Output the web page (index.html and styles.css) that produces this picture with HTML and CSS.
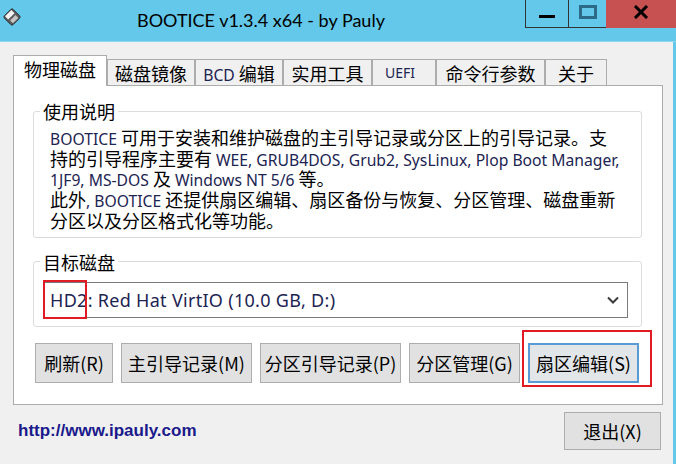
FILE: index.html
```html
<!DOCTYPE html>
<html lang="zh-CN">
<head>
    <meta charset="UTF-8">
    <meta name="viewport" content="width=device-width, initial-scale=1.0">
    <link rel="stylesheet" href="styles.css">
    <title>BOOTICE v1.3.4 x64 - by Pauly</title>
</head>
<body>
<div class="window">
    <header class="titlebar">
        <svg class="titlebar__icon" viewBox="0 0 16 16">
            <g transform="rotate(-45 8 8)">
                <rect x="2.5" y="2.5" width="11" height="11" rx="1.5" fill="#5a5a5a" stroke="#2b2b2b" stroke-width="0.8"/>
                <rect x="4" y="3.2" width="8" height="4" fill="#f2f2f2"/>
                <rect x="4.6" y="9" width="6.8" height="3.6" fill="#c4c4c4"/>
            </g>
        </svg>
        <div class="titlebar__text">BOOTICE v1.3.4 x64 - by Pauly</div>
        <div class="titlebar__controls">
            <div class="titlebar__btn titlebar__btn--min"><span class="titlebar__min-bar"></span></div>
            <div class="titlebar__btn titlebar__btn--max"><span class="titlebar__max-box"></span></div>
            <div class="titlebar__btn titlebar__btn--close">
                <svg class="titlebar__x" viewBox="0 0 16 14">
                    <path d="M2 1L14 13M14 1L2 13" stroke="#000" stroke-width="3"/>
                </svg>
            </div>
        </div>
    </header>

    <main class="client">
        <ul class="tabs">
            <li class="tab tab--active" style="width: 94px">物理磁盘</li>
            <li class="tab" style="width: 88px">磁盘镜像</li>
            <li class="tab" style="width: 88px"><span class="latin">BCD</span> 编辑</li>
            <li class="tab" style="width: 89px">实用工具</li>
            <li class="tab tab--small" style="width: 64px">UEFI</li>
            <li class="tab" style="width: 109px">命令行参数</li>
            <li class="tab" style="width: 62px">关于</li>
        </ul>

        <section class="panel">
            <fieldset class="group group--info">
                <legend class="group__title">使用说明</legend>
                <p class="group__text">
                    <span class="latin">BOOTICE</span> 可用于安装和维护磁盘的主引导记录或分区上的引导记录。支<br>
                    持的引导程序主要有 <span class="latin">WEE, GRUB4DOS, Grub2, SysLinux, Plop Boot Manager,</span><br>
                    <span class="latin">1JF9, MS-DOS</span> 及 <span class="latin">Windows NT 5/6</span> 等。<br>
                    此外<span class="latin">, BOOTICE</span> 还提供扇区编辑、扇区备份与恢复、分区管理、磁盘重新<br>
                    分区以及分区格式化等功能。
                </p>
            </fieldset>

            <fieldset class="group group--disk">
                <legend class="group__title">目标磁盘</legend>
                <div class="combo">
                    <span class="combo__value">HD2: Red Hat VirtIO (10.0 GB, D:)</span>
                    <svg class="combo__arrow" viewBox="0 0 12 8">
                        <path d="M1 1.5L6 6.5L11 1.5" fill="none" stroke="#3a3a3a" stroke-width="2"/>
                    </svg>
                </div>
            </fieldset>

            <div class="actions">
                <button class="btn" style="width: 78px">刷新(R)</button>
                <button class="btn" style="width: 131px">主引导记录(M)</button>
                <button class="btn" style="width: 141px">分区引导记录(P)</button>
                <button class="btn" style="width: 111px">分区管理(G)</button>
                <button class="btn btn--focus" style="width: 111px">扇区编辑(S)</button>
            </div>
        </section>

        <footer class="footer">
            <a class="footer__link" href="#">http://www.ipauly.com</a>
            <button class="btn btn--exit">退出(X)</button>
        </footer>
    </main>

    <div class="mark mark--hd"></div>
    <div class="mark mark--sector"></div>
</div>
</body>
</html>
```

FILE: styles.css
```css
body {
    margin: 0;
    padding: 0;
    width: 676px;
    height: 464px;
    overflow: hidden;
    font-family: "Noto Sans CJK SC", "Noto Sans", sans-serif;
    font-size: 18px;
    color: #000000;
    background-color: #f0f0f0;
}

.window {
    position: relative;
    height: 464px;
    display: flex;
    flex-direction: column;
}

/* title bar */
.titlebar {
    height: 41px;
    background-color: #63c8e9;
    border-bottom: 1px solid #8fd5ee;
    display: flex;
    align-items: flex-start;
}
.titlebar__icon {
    width: 18px;
    height: 18px;
    margin: 8px 0 0 3px;
}
.titlebar__text {
    margin: 6px 0 0 116px;
    font-family: Lato, "Noto Sans", sans-serif;
    font-size: 18px;
    line-height: 28px;
}
.titlebar__controls {
    margin-left: auto;
    height: 28px;
    display: flex;
}
.titlebar__btn {
    box-sizing: border-box;
    height: 28px;
    display: flex;
    justify-content: center;
}
.titlebar__btn--min {
    width: 43px;
    border-left: 1px solid #333333;
    border-bottom: 1px solid #333333;
    padding-top: 15px;
}
.titlebar__btn--max {
    width: 38px;
    border-left: 1px solid #333333;
    border-bottom: 1px solid #333333;
    padding-top: 5px;
}
.titlebar__btn--close {
    width: 70px;
    background-color: #c75050;
    padding-top: 5px;
}
.titlebar__min-bar {
    width: 16px;
    height: 3px;
    background-color: #000000;
}
.titlebar__max-box {
    box-sizing: border-box;
    width: 18px;
    height: 14px;
    border: 3px solid #2b6b88;
}
.titlebar__x {
    width: 16px;
    height: 14px;
}

/* client area */
.client {
    flex: 1;
    border-right: 3px solid #63c8e9;
    display: flex;
    flex-direction: column;
}

.tabs {
    list-style: none;
    margin: 13px 0 -1px 13px;
    padding: 0;
    display: flex;
    align-items: flex-end;
    position: relative;
    z-index: 1;
}
.tab {
    box-sizing: border-box;
    height: 26px;
    margin-bottom: 1px;
    padding-top: 2px;
    border: 1px solid #acacac;
    border-bottom: none;
    background-color: #f0f0f0;
    text-align: center;
    line-height: 22px;
    white-space: nowrap;
}
.tab--active {
    height: 31px;
    margin-bottom: 0;
    padding-top: 2px;
    background-color: #ffffff;
}
.tab--small {
    padding-right: 8px;
    font-family: "Noto Sans", sans-serif;
    font-size: 14px;
    color: #1c2452;
}

.panel {
    box-sizing: border-box;
    height: 320px;
    margin: 0 10px 0 13px;
    padding: 0 20px 0 19px;
    border: 1px solid #acacac;
    background-color: #ffffff;
    display: flex;
    flex-direction: column;
}

.group {
    margin: 0;
    border: 1px solid #dcdcdc;
    border-radius: 3px;
}
.group__title {
    margin-left: -10px;
    padding: 0 3px;
    line-height: 22px;
}
.group--info {
    margin-top: 14px;
    padding: 5px 8px 7px 16px;
}
.group__text {
    margin: 0;
    line-height: 20px;
    white-space: nowrap;
}
.latin {
    font-family: "Noto Sans", sans-serif;
    font-size: 15.7px;
    line-height: 1;
    color: #1c2452;
}

.group--disk {
    margin-top: 13px;
    padding: 9px 13px 8px 9px;
}
.group--disk .group__title {
    margin-left: -3px;
}
.combo {
    box-sizing: border-box;
    height: 36px;
    padding: 0 8px 0 6px;
    border: 1px solid #7a7a7a;
    background-color: #ffffff;
    display: flex;
    align-items: center;
}
.combo__value {
    font-family: "Noto Sans", sans-serif;
    letter-spacing: 0.3px;
    color: #1c2452;
}
.combo__arrow {
    margin-left: auto;
    width: 12px;
    height: 8px;
}

.actions {
    margin: 16px 0 0 2px;
    display: flex;
    gap: 8px;
}
.btn {
    box-sizing: border-box;
    height: 40px;
    padding: 0;
    border: 1px solid #adadad;
    background-color: #e1e1e1;
    font-family: inherit;
    font-size: 18px;
    color: #000000;
    white-space: nowrap;
}
.btn--focus {
    border: 2px solid #5a9bd5;
    background-color: #e3e6e9;
}

.footer {
    flex: 1;
    padding: 0 12px 7px 18px;
    display: flex;
    align-items: center;
}
.footer__link {
    font-family: "Liberation Sans", Arial, sans-serif;
    font-weight: bold;
    font-size: 17px;
    color: #1a1a8c;
    text-decoration: none;
}
.btn--exit {
    width: 97px;
    height: 38px;
    margin-left: auto;
}

/* red highlight marks drawn over the window */
.mark {
    position: absolute;
    box-sizing: border-box;
    border: 2px solid #e01b24;
}
.mark--hd {
    left: 43px;
    top: 280px;
    width: 44px;
    height: 39px;
}
.mark--sector {
    left: 522px;
    top: 330px;
    width: 130px;
    height: 57px;
}
```
